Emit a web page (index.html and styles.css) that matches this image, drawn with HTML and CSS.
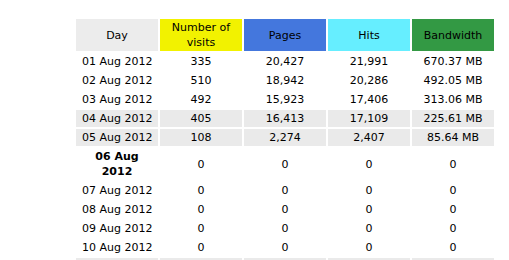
FILE: index.html
```html
<!DOCTYPE html>
<html>
<head>
<meta charset="utf-8">
<link rel="stylesheet" href="styles.css">
</head>
<body>
<table class="days">
  <colgroup><col class="c"><col class="c"><col class="c"><col class="c"><col class="c"></colgroup>
  <thead>
    <tr>
      <th class="h-day">Day</th>
      <th class="h-visits">Number of visits</th>
      <th class="h-pages">Pages</th>
      <th class="h-hits">Hits</th>
      <th class="h-bw">Bandwidth</th>
    </tr>
  </thead>
  <tbody>
    <tr><td class="day">01 Aug 2012</td><td>335</td><td>20,427</td><td>21,991</td><td>670.37 MB</td></tr>
    <tr><td class="day">02 Aug 2012</td><td>510</td><td>18,942</td><td>20,286</td><td>492.05 MB</td></tr>
    <tr><td class="day">03 Aug 2012</td><td>492</td><td>15,923</td><td>17,406</td><td>313.06 MB</td></tr>
    <tr class="we"><td class="day">04 Aug 2012</td><td>405</td><td>16,413</td><td>17,109</td><td>225.61 MB</td></tr>
    <tr class="we"><td class="day">05 Aug 2012</td><td>108</td><td>2,274</td><td>2,407</td><td>85.64 MB</td></tr>
    <tr><td class="today">06 Aug 2012</td><td>0</td><td>0</td><td>0</td><td>0</td></tr>
    <tr><td class="day">07 Aug 2012</td><td>0</td><td>0</td><td>0</td><td>0</td></tr>
    <tr><td class="day">08 Aug 2012</td><td>0</td><td>0</td><td>0</td><td>0</td></tr>
    <tr><td class="day">09 Aug 2012</td><td>0</td><td>0</td><td>0</td><td>0</td></tr>
    <tr><td class="day">10 Aug 2012</td><td>0</td><td>0</td><td>0</td><td>0</td></tr>
    <tr class="we"><td>&nbsp;</td><td>&nbsp;</td><td>&nbsp;</td><td>&nbsp;</td><td>&nbsp;</td></tr>
  </tbody>
</table>
</body>
</html>
```
FILE: styles.css
```css
html, body {
  margin: 0;
  padding: 0;
  background: #ffffff;
}
body {
  font-family: "DejaVu Sans", Verdana, sans-serif;
  font-size: 11px;
  color: #000000;
}
.days {
  margin: 17px 0 0 74px;
  border-collapse: separate;
  border-spacing: 2px;
  table-layout: fixed;
  width: 422px;
}
.c {
  width: 82px;
}
.days th,
.days td {
  padding: 1px 2px;
  line-height: 15px;
  text-align: center;
  vertical-align: middle;
  font-weight: normal;
}
.days th {
  height: 30px;
}
.h-day { background: #ececec; }
.h-visits { background: #f2f200; }
.h-pages { background: #4477dd; }
.h-hits { background: #66eeff; }
.h-bw { background: #339944; }
.days td.day {
  text-align: left;
  padding-left: 6px;
  white-space: nowrap;
}
.days td.today {
  font-weight: bold;
  padding: 1px 14px;
}
.we td {
  background: #eaeaea;
}
```
